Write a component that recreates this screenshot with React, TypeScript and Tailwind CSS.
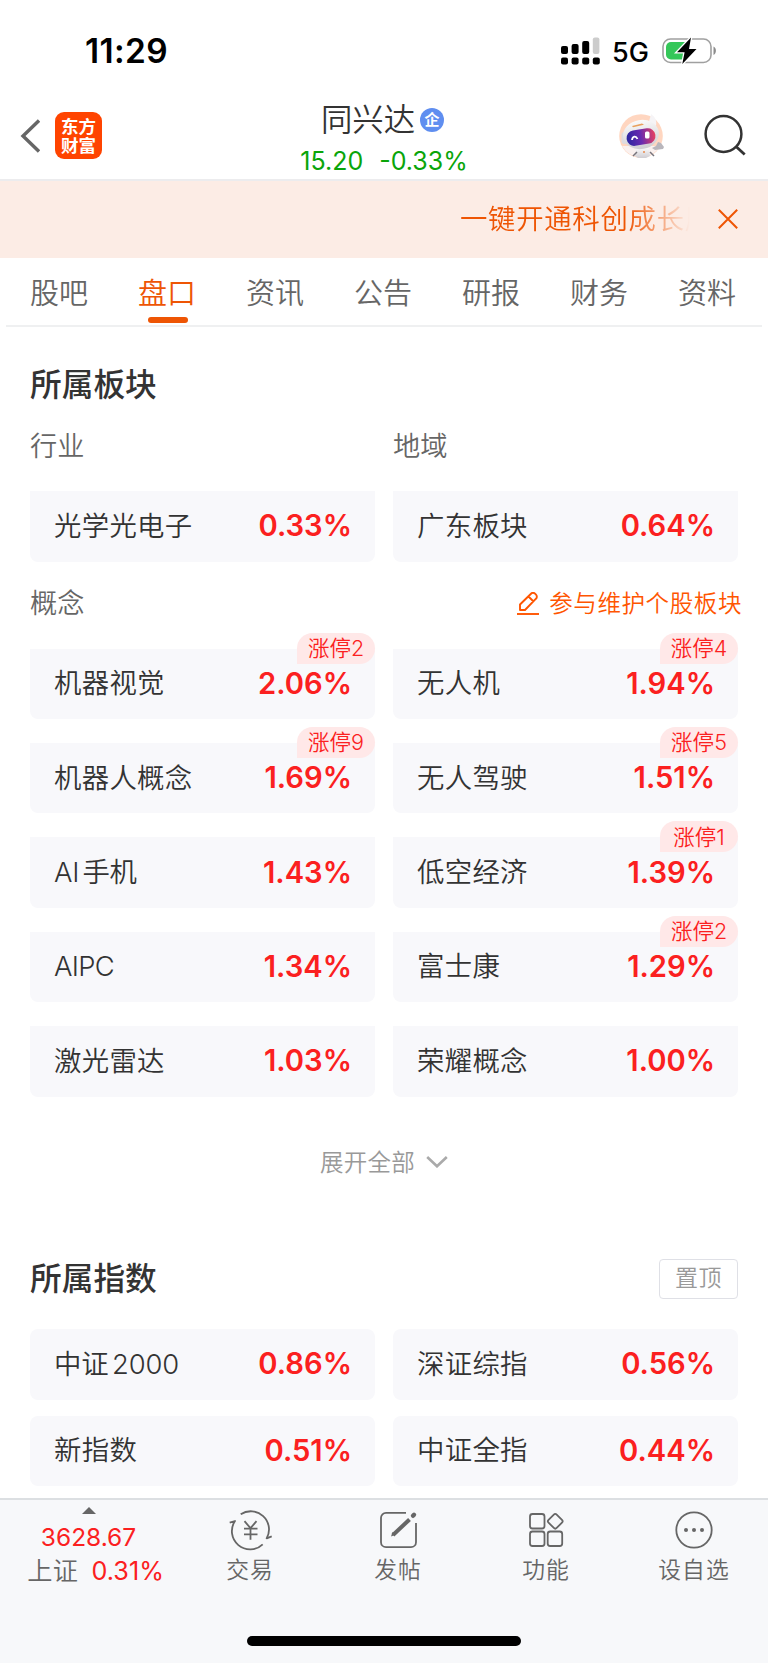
import React from 'react';

interface Board {
  name: string;
  change: string;
  limitUp?: number;
  nameClass?: string;
}

const tabs = ['股吧', '盘口', '资讯', '公告', '研报', '财务', '资料'];

const concepts: Board[] = [
  { name: '机器视觉', change: '2.06%', limitUp: 2 },
  { name: '无人机', change: '1.94%', limitUp: 4 },
  { name: '机器人概念', change: '1.69%', limitUp: 9 },
  { name: '无人驾驶', change: '1.51%', limitUp: 5 },
  { name: 'AI手机', change: '1.43%', nameClass: 'tracking-[-0.3px]' },
  { name: '低空经济', change: '1.39%', limitUp: 1 },
  { name: 'AIPC', change: '1.34%', nameClass: 'tracking-[-0.7px]' },
  { name: '富士康', change: '1.29%', limitUp: 2 },
  { name: '激光雷达', change: '1.03%' },
  { name: '荣耀概念', change: '1.00%' },
];

const indexes: Board[] = [
  { name: '中证2000', change: '0.86%', nameClass: 'tracking-[-0.1px]' },
  { name: '深证综指', change: '0.56%' },
  { name: '新指数', change: '0.51%' },
  { name: '中证全指', change: '0.44%' },
];

const BoardCard: React.FC<{ board: Board; rounded?: boolean }> = ({ board, rounded }) => (
  <div
    className={`relative flex h-[70.5px] items-center justify-between bg-[#f8f8fb] pl-6 pr-[23px] ${
      rounded ? 'rounded-lg' : 'rounded-b-lg'
    }`}
  >
    <span
      className={`text-[27.4px] font-[350] text-[#333] [text-autospace:normal] ${
        board.nameClass ?? 'tracking-[0.3px]'
      }`}
    >
      {board.name}
    </span>
    <span className="text-[29.2px] font-semibold text-[#fb2020]">{board.change}</span>
    {board.limitUp !== undefined && (
      <span className="absolute -top-4 right-0 flex h-[31px] w-[78px] items-center justify-center rounded-t-[16px] rounded-br-[16px] bg-[#ffe8e8] text-[21.5px] font-[350] text-[#fb2020]">
        涨停{board.limitUp}
      </span>
    )}
  </div>
);

const StatusBar: React.FC = () => (
  <div className="flex h-[100px] shrink-0 items-center pl-[85px] pr-[52px] text-black">
    <span className="mt-[3px] text-[33.4px] font-semibold tracking-[0.4px]">11:29</span>
    <div className="ml-auto mt-[2px] flex items-center">
      <svg className="h-7 w-[39px]" viewBox="0 0 39 28" fill="currentColor">
        <rect x="0" y="9" width="7" height="8" rx="2" />
        <rect x="10.6" y="7" width="7" height="10" rx="2" />
        <rect x="21.2" y="4" width="7" height="13" rx="2" />
        <rect x="31.8" y="0.5" width="6.6" height="16.5" rx="2" fill="#ccc" />
        <rect x="0" y="20.5" width="7" height="7" rx="2" />
        <rect x="10.6" y="20.5" width="7" height="7" rx="2" />
        <rect x="21.2" y="20.5" width="7" height="7" rx="2" />
        <rect x="31.8" y="20.5" width="7" height="7" rx="2" />
      </svg>
      <span className="ml-[12px] mt-[4px] w-[36px] text-[27px] font-medium">5G</span>
      <svg className="ml-[14px] h-7 w-[54px]" viewBox="0 0 54 28" fill="none">
        <rect x="1" y="2" width="48" height="23.5" rx="7.5" stroke="#a0a0a0" strokeWidth="1.6" />
        <path d="M51.5 9.5c1.6.8 2.4 2.3 2.4 4.2s-.8 3.4-2.4 4.2z" fill="#8c8c8c" />
        <path d="M9 5h14v17.5H9a5 5 0 0 1-5-5V10a5 5 0 0 1 5-5z" fill="#35c759" />
        <path
          d="M29 .5 15 15.200h7.600L20.300 27 34.500 12H27z"
          fill="#000"
          stroke="#fff"
          strokeWidth="2.6"
          paintOrder="stroke"
        />
      </svg>
    </div>
  </div>
);

const Robot: React.FC = () => (
  <svg className="h-[48px] w-[48px]" viewBox="0 0 48 48">
    <defs>
      <linearGradient id="visor" x1="0" y1="0" x2="1" y2="0">
        <stop offset="0" stopColor="#2b25a0" />
        <stop offset="0.5" stopColor="#6a2bb0" />
        <stop offset="1" stopColor="#e84060" />
      </linearGradient>
      <linearGradient id="shell" x1="0" y1="0" x2="0" y2="1">
        <stop offset="0" stopColor="#fafafa" />
        <stop offset="1" stopColor="#cfcdd2" />
      </linearGradient>
    </defs>
    <circle cx="23" cy="24" r="21.8" fill="#ffd6c0" />
    <path d="M4 34h38a21.8 21.8 0 0 1-38 0z" fill="#faf1ef" />
    <path d="M31 10c1-5 2-6 2-8 4 3 6 6 5 12z" fill="#f6f4f6" />
    <path d="M18 36h13l1 8-4 2h-8l-3-2z" fill="url(#shell)" />
    <path d="m19 40-4 4M32 40l4 4" stroke="#77747b" strokeWidth="1.5" />
    <path d="m34 36 4-2 2-4 3 1 3 4-1 2-8 1z" fill="#b9b6bc" />
    <rect x="3.5" y="20" width="6" height="12" rx="3" fill="#dddbe0" />
    <ellipse cx="23" cy="22.5" rx="18" ry="14.5" transform="rotate(-10 23 22.5)" fill="url(#shell)" />
    <path d="m14 14 10-2.500 2 1.200-11 2.600z" fill="#e9a05c" />
    <rect x="8.500" y="17.300" width="29" height="15.500" rx="7.500" transform="rotate(-9 23 25)" fill="url(#visor)" />
    <path d="M14 28c.5-4 4-4.500 5.500-1" fill="none" stroke="#fff" strokeWidth="1.8" />
    <rect x="27" y="19.500" width="4.500" height="7" rx="1.500" fill="#fff" />
    <circle cx="26" cy="40" r="1" fill="#e9894a" />
  </svg>
);

const Header: React.FC = () => (
  <header className="flex h-[81px] shrink-0 border-b-2 border-[#ececee]">
    <div className="flex w-[256px] pl-[20px] pt-3">
      <svg className="mt-[7px] h-[35px] w-[20px]" viewBox="0 0 20 35" fill="none">
        <path d="M19 1.500 3 17l16 15.500" stroke="#666" strokeWidth="3.4" />
      </svg>
      <div className="ml-[15px] flex h-[47px] w-[47px] flex-col items-center justify-center rounded-[9px] bg-[#ff4400] text-[17.5px] font-bold leading-[19px] text-white">
        <span>东方</span>
        <span>财富</span>
      </div>
    </div>
    <div className="flex w-[256px] flex-col items-center">
      <div className="flex h-[40px] items-center pr-[3px]">
        <span className="mt-[1px] text-[31.4px] font-[350] text-[#333]">同兴达</span>
        <span className="ml-[5px] flex h-6 w-6 items-center justify-center rounded-full bg-[#5f8ef0] text-[15px] font-bold text-white">
          企
        </span>
      </div>
      <div className="flex h-[41px] items-center gap-[16px] pt-[3px] text-[25px] text-[#0aa50a]">
        <span>15.20</span>
        <span>-0.33%</span>
      </div>
    </div>
    <div className="flex w-[256px] pl-[106px] pt-3">
      <Robot />
      <svg className="ml-[37px] mt-[2px] h-[44px] w-[44px]" viewBox="0 0 44 44" fill="none">
        <circle cx="20.5" cy="20" r="17.9" stroke="#333" strokeWidth="2.5" />
        <path d="m33 32.500 8.700 8" stroke="#333" strokeWidth="2.8" />
      </svg>
    </div>
  </header>
);

const Notice: React.FC = () => (
  <div className="flex h-[77px] shrink-0 items-center bg-[#fcece5] pl-[460px]">
    <div className="w-[254px] shrink-0 whitespace-nowrap text-[27.4px] font-[350] tracking-[0.7px] text-[#ee5504] [mask-image:linear-gradient(to_right,#000_166px,transparent_230px)]">
      一键开通科创成长层
    </div>
    <svg className="mb-[2px] ml-[4px] h-5 w-5" viewBox="0 0 20 20" fill="none">
      <path d="m.8.8 18.400 18.400M19.200.8.8 19.200" stroke="#ee5504" strokeWidth="2" />
    </svg>
  </div>
);

const TabBar: React.FC = () => (
  <nav className="mx-[6px] flex h-[69px] shrink-0 border-b-2 border-[#eff0f1]">
    {tabs.map((tab) => (
      <div key={tab} className="flex w-[108px] flex-col items-center">
        <span
          className={`mt-[12px] h-[47px] pr-[2px] text-[29px] font-[350] leading-[47px] ${
            tab === '盘口' ? 'text-[#ee5504]' : 'text-[#666]'
          }`}
        >
          {tab}
        </span>
        {tab === '盘口' && <span className="h-[6px] w-[40px] rounded-full bg-[#ee5504]" />}
      </div>
    ))}
  </nav>
);

const ToolItem: React.FC<{ label: string; children: React.ReactNode }> = ({ label, children }) => (
  <div className="flex w-[148px] flex-col items-center pt-[8px]">
    <svg className="h-[44px] w-[44px]" viewBox="0 0 44 44" fill="none" stroke="#666" strokeWidth="1.8">
      {children}
    </svg>
    <span className="h-[35px] text-[22.8px] font-[350] leading-[35px] tracking-[1px] text-[#666]">{label}</span>
  </div>
);

const BottomBar: React.FC = () => (
  <footer className="mt-auto flex h-[165px] shrink-0 flex-col border-t-2 border-[#dcdfe2] bg-[#f7f8fa]">
    <div className="flex h-[136px]">
      <div className="flex w-[176px] flex-col items-center">
        <svg className="ml-[1px] mt-[7px] h-[7px] w-[14px]" viewBox="0 0 14 7">
          <path d="m7 0 7 7H0z" fill="#666" />
        </svg>
        <span className="mt-[6px] h-[34px] pl-[1px] text-[24.5px] leading-[34px] text-[#fb2020]">3628.67</span>
        <div className="flex h-[36px] items-center gap-[13px] pl-[15px] text-[25.2px]">
          <span className="font-[350] tracking-[0.5px] text-[#666]">上证</span>
          <span className="text-[#fb2020]">0.31%</span>
        </div>
      </div>
      <ToolItem label="交易">
        <path d="M12.700 6.300A18.200 18.200 0 0 1 38.700 30.300L43.700 28.300" strokeLinejoin="round" />
        <path d="M34.700 36.300A18.200 18.200 0 0 1 7 13L1.700 14.700" strokeLinejoin="round" />
        <path d="m16.500 13.200 6 7 6-7M22.500 20v11.700M16 20.700h13.500M16 26.300h13.500" />
      </ToolItem>
      <ToolItem label="发帖">
        <path d="M30 4.800H10A5 5 0 0 0 5 9.800v24.400a5 5 0 0 0 5 5h25a5 5 0 0 0 5-5V15" />
        <path d="M17 27 33.500 11.500" strokeWidth="4" />
        <path d="m15 28.500 1.500-4.500 3 2.800z" fill="#666" stroke="none" />
        <path d="m37 7.800 1-1" strokeWidth="4.4" strokeLinecap="round" />
      </ToolItem>
      <ToolItem label="功能">
        <rect x="6" y="6" width="14.5" height="14.5" rx="2.5" />
        <rect x="6" y="23.5" width="14.5" height="14.5" rx="2.5" />
        <rect x="23.7" y="23.5" width="14.5" height="14.5" rx="2.5" />
        <rect x="25.5" y="7.5" width="11.5" height="11.5" rx="2" transform="rotate(45 31.25 13.25)" />
      </ToolItem>
      <ToolItem label="设自选">
        <circle cx="22" cy="22" r="17.7" />
        <circle cx="14" cy="22" r="2" fill="#666" stroke="none" />
        <circle cx="22" cy="22" r="2" fill="#666" stroke="none" />
        <circle cx="30" cy="22" r="2" fill="#666" stroke="none" />
      </ToolItem>
    </div>
    <div className="mx-auto h-[10px] w-[274px] rounded-full bg-black" />
  </footer>
);

const App: React.FC = () => {
  return (
    <div className="flex h-[1663px] w-[768px] flex-col overflow-hidden bg-white font-[Inter,'Noto_Sans_CJK_SC',sans-serif]">
      <StatusBar />
      <Header />
      <Notice />
      <TabBar />

      <main className="px-[30px] pt-[27px]">
        <h2 className="flex h-[62px] items-center text-[31.7px] font-medium text-[#333]">所属板块</h2>

        <div className="grid grid-cols-2 gap-x-[18px]">
          <div className="flex h-[75px] items-center pb-[13px] text-[27.2px] font-[350] text-[#666]">行业</div>
          <div className="flex h-[75px] items-center pb-[13px] text-[27.2px] font-[350] text-[#666]">地域</div>
          <BoardCard board={{ name: '光学光电子', change: '0.33%' }} />
          <BoardCard board={{ name: '广东板块', change: '0.64%' }} />
        </div>

        <div className="-mr-[4px] flex h-[87px] items-center justify-between pb-[2px]">
          <span className="text-[27.2px] font-[350] text-[#666]">概念</span>
          <div className="flex items-center gap-[10px] text-[#ff5500]">
            <svg className="h-6 w-[22px]" viewBox="0 0 22 24" fill="none" stroke="currentColor" strokeWidth="1.9">
              <path d="M0 22h22" />
              <path d="M3 18V12.500L14 1.700a2.800 2.800 0 0 1 4 0l1 1a2.800 2.800 0 0 1 0 4L8 18zM11.500 4.500l5 5" strokeLinejoin="round" />
            </svg>
            <span className="text-[23.5px] font-[350] tracking-[0.6px]">参与维护个股板块</span>
          </div>
        </div>

        <div className="grid grid-cols-2 gap-x-[18px] gap-y-[23.9px]">
          {concepts.map((board) => (
            <BoardCard key={board.name} board={board} />
          ))}
        </div>

        <div className="flex h-[131.5px] items-center justify-center gap-[11px] text-[#999]">
          <span className="text-[23.5px] font-[350] tracking-[0.3px]">展开全部</span>
          <svg className="h-3 w-[22px]" viewBox="0 0 22 12" fill="none">
            <path d="m1.200 1 9.800 9.300L20.800 1" stroke="#aaa" strokeWidth="2.6" />
          </svg>
        </div>

        <div className="flex h-[101px] items-center justify-between">
          <h2 className="text-[31.7px] font-medium text-[#333]">所属指数</h2>
          <button className="flex h-[40px] w-[79px] items-center justify-center rounded border border-[#dfe0e6] text-[23px] font-[350] tracking-[0.5px] text-[#999]">
            置顶
          </button>
        </div>

        <div className="grid grid-cols-2 gap-x-[18px] gap-y-[16px]">
          {indexes.map((board) => (
            <BoardCard key={board.name} board={board} rounded />
          ))}
        </div>
      </main>

      <BottomBar />
    </div>
  );
};

export default App;
